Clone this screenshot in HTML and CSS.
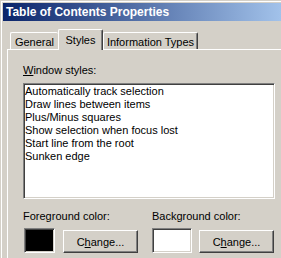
FILE: index.html
```html
<!DOCTYPE html>
<html lang="en">
<head>
    <meta charset="UTF-8">
    <title>Table of Contents Properties</title>
    <link rel="stylesheet" href="styles.css">
</head>
<body>
    <div class="window">
        <div class="titlebar">Table of Contents Properties</div>

        <!-- Tabs -->
        <div class="tabs">
            <div class="tab tab-general">General</div>
            <div class="tab tab-styles active">Styles</div>
            <div class="tab tab-info">Information Types</div>
        </div>

        <div class="panel">
            <div class="label"><u>W</u>indow styles:</div>
            <ul class="listbox">
                <li>Automatically track selection</li>
                <li>Draw lines between items</li>
                <li>Plus/Minus squares</li>
                <li>Show selection when focus lost</li>
                <li>Start line from the root</li>
                <li>Sunken edge</li>
            </ul>

            <!-- Colors -->
            <div class="colors">
                <div class="color-group fg">
                    <div class="label">Foreground color:</div>
                    <div class="color-row">
                        <div class="swatch swatch-black"></div>
                        <button class="btn">C<u>h</u>ange...</button>
                    </div>
                </div>
                <div class="color-group bg">
                    <div class="label">Background color:</div>
                    <div class="color-row">
                        <div class="swatch swatch-white"></div>
                        <button class="btn">C<u>h</u>ange...</button>
                    </div>
                </div>
            </div>
        </div>
    </div>
</body>
</html>
```

FILE: styles.css
```css
body {
    margin: 0;
    background: #d4d0c8;
    font-family: "Liberation Sans", Arial, sans-serif;
    font-size: 11px;
    color: #000;
    overflow: hidden;
}

.window {
    height: 258px;
    box-sizing: border-box;
    border-left: 1px solid #d4d0c8;
    border-top: 1px solid #d4d0c8;
    padding: 2px 0 0 2px;
    box-shadow: inset 1px 1px #fff;
}

.titlebar {
    height: 18px;
    line-height: 18px;
    padding-left: 3px;
    color: #fff;
    font-weight: bold;
    font-size: 12px;
    background: linear-gradient(to right, #0a246a, #a2c2ea);
}

.tabs {
    display: flex;
    align-items: flex-end;
    height: 20px;
    margin: 8px 0 0 7px;
}

.tab {
    box-sizing: border-box;
    height: 17px;
    padding-top: 2px;
    line-height: 14px;
    text-align: center;
    background: #d4d0c8;
    border-top: 1px solid #fff;
    border-left: 1px solid #fff;
    border-right: 1px solid #404040;
    border-radius: 2px 2px 0 0;
    box-shadow: inset -1px 0 #808080;
}

.tab-general {
    width: 48px;
    border-right: none;
    box-shadow: none;
}

.tab-styles {
    width: 45px;
}

.tab-info {
    width: 95px;
}

.tab.active {
    position: relative;
    z-index: 1;
    height: 21px;
    margin-bottom: -1px;
    padding-top: 3px;
}

.panel {
    margin-left: 4px;
    height: 220px;
    border-top: 1px solid #fff;
    border-left: 1px solid #fff;
    padding-left: 15px;
}

.label {
    line-height: 13px;
}

.panel > .label {
    margin-top: 14px;
}

.listbox {
    list-style: none;
    margin: 6px 0 0;
    padding: 1px 3px 0 1px;
    width: 252px;
    height: 116px;
    box-sizing: border-box;
    background: #fff;
    border: 1px solid;
    border-color: #808080 #fff #fff #808080;
    box-shadow: inset 1px 1px #404040, inset -1px -1px #d4d0c8;
}

.listbox li {
    line-height: 13px;
    white-space: nowrap;
}

.colors {
    display: flex;
    margin-top: 11px;
}

.color-group.fg {
    width: 129px;
}

.color-row {
    display: flex;
    align-items: flex-start;
    margin-top: 5px;
}

.swatch {
    box-sizing: border-box;
    height: 25px;
    border: 1px solid;
    border-color: #808080 #fff #fff #808080;
    box-shadow: inset 1px 1px #404040, inset -1px -1px #d4d0c8;
}

.swatch-black {
    width: 31px;
    margin-left: 1px;
    background: #000;
}

.swatch-white {
    width: 40px;
    background: #fff;
}

.btn {
    box-sizing: border-box;
    width: 75px;
    height: 23px;
    margin-top: 2px;
    padding: 0;
    font-family: inherit;
    font-size: 11px;
    color: #000;
    background: #d4d0c8;
    border: 1px solid;
    border-color: #fff #404040 #404040 #fff;
    box-shadow: inset -1px -1px #808080;
}

.fg .btn {
    margin-left: 8px;
}

.bg .btn {
    margin-left: 7px;
}
```
